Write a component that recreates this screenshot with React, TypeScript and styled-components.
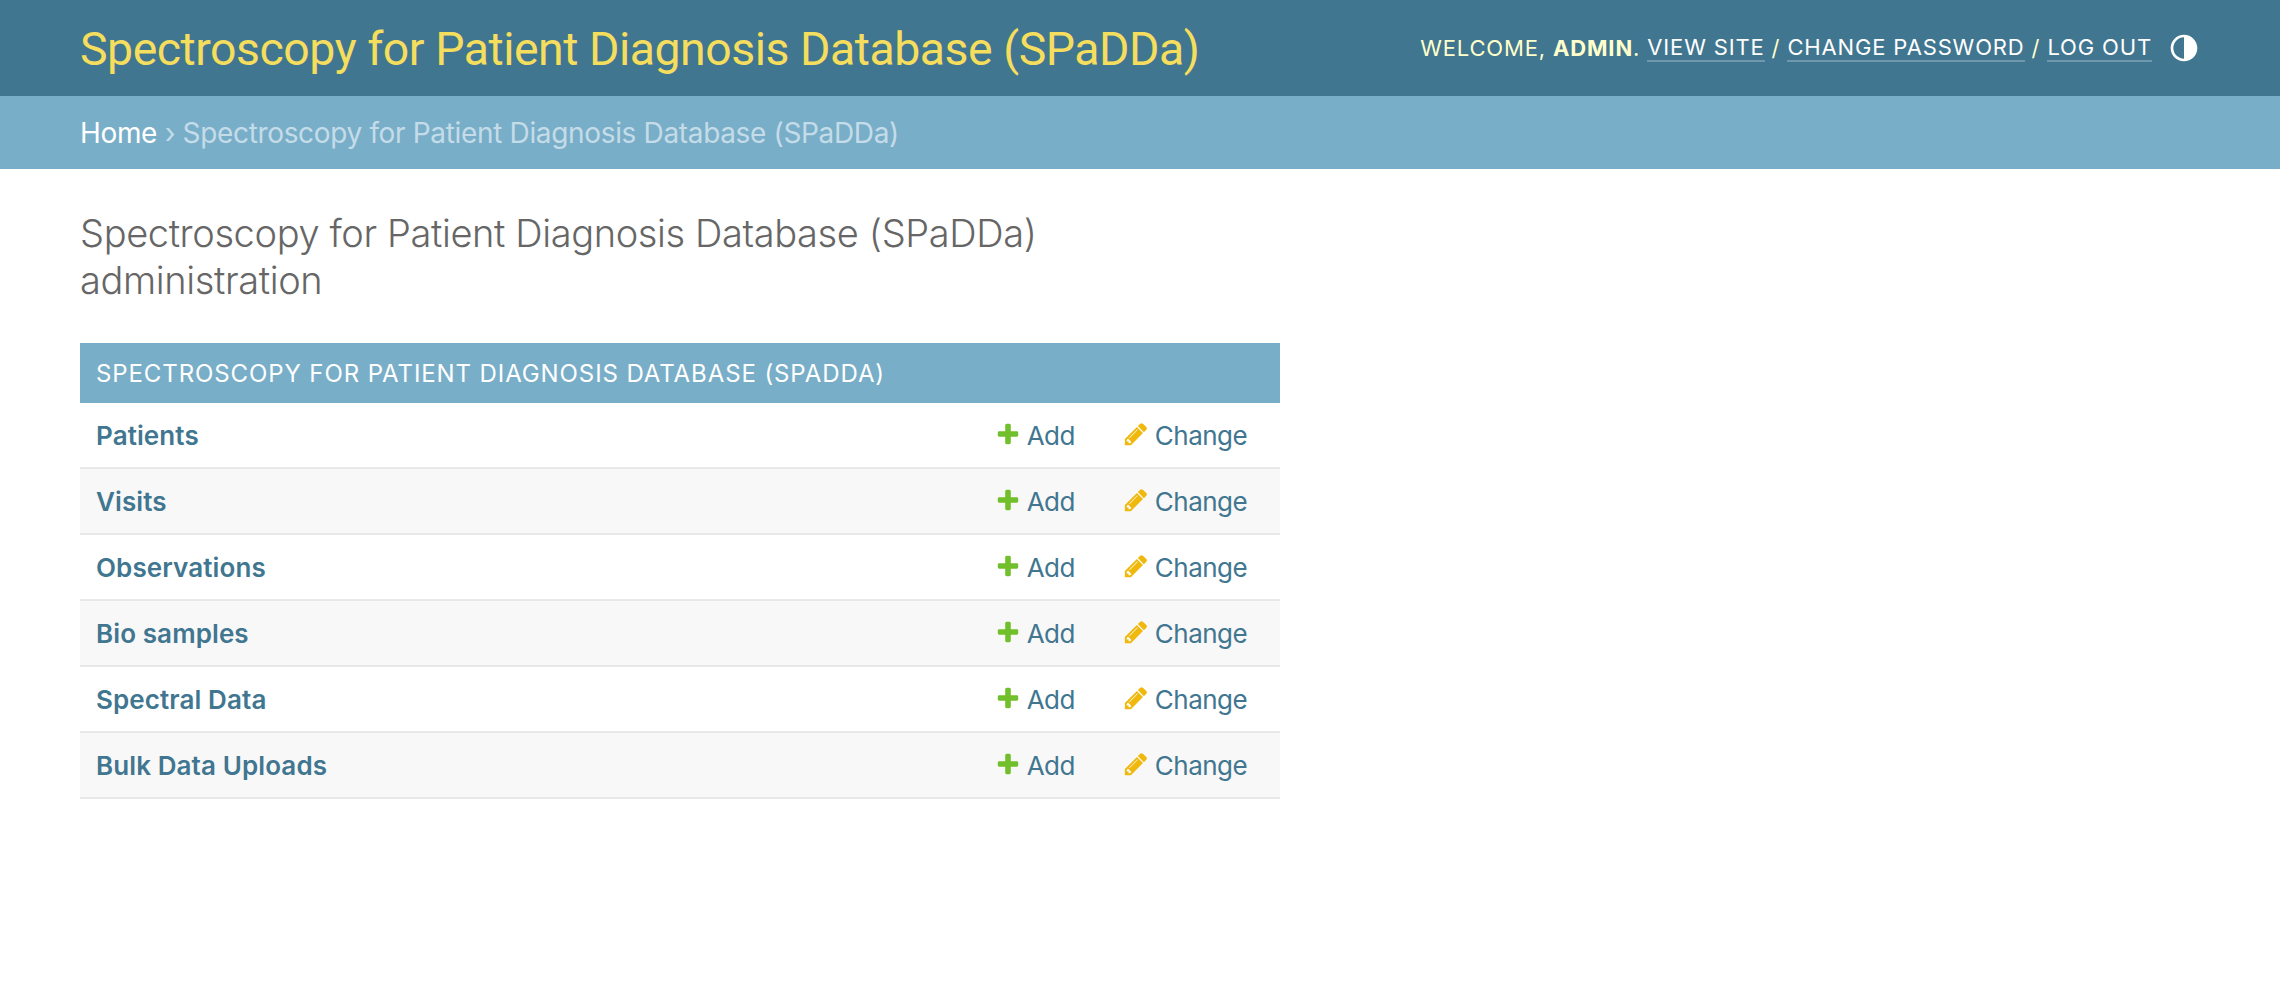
import React from "react";
import styled, { createGlobalStyle } from "styled-components";

const GlobalStyle = createGlobalStyle`
  html, body {
    margin: 0;
    padding: 0;
    background: #fff;
    font-family: Inter, "Liberation Sans", sans-serif;
    -webkit-font-smoothing: antialiased;
  }
`;

const Header = styled.header`
  height: 96px;
  box-sizing: border-box;
  padding: 0 80px;
  display: flex;
  align-items: center;
  justify-content: space-between;
  background: #417690;
`;

const Branding = styled.h1`
  margin: 2px 0 0;
  font-family: Roboto, "Liberation Sans", sans-serif;
  font-size: 46.4px;
  font-weight: 400;
  letter-spacing: -0.47px;
  color: #f5dd5d;
`;

const UserTools = styled.div`
  display: flex;
  align-items: center;
  font-size: 22px;
  letter-spacing: 0.85px;
  text-transform: uppercase;
  color: #ffc;
  white-space: pre;
`;

const UserName = styled.strong`
  font-weight: 700;
`;

const ToolLink = styled.a`
  color: #fff;
  border-bottom: 2px solid rgba(255, 255, 255, 0.25);
`;

const ThemeToggle = styled.button`
  width: 32px;
  height: 32px;
  margin-left: 16px;
  padding: 0;
  border: 0;
  background: none;
  color: #fff;
  display: flex;
  svg {
    width: 32px;
    height: 32px;
    fill: currentColor;
  }
`;

const Breadcrumbs = styled.nav`
  height: 73px;
  box-sizing: border-box;
  padding: 0 80px;
  display: flex;
  align-items: center;
  background: #79aec8;
  color: #c4dce8;
  font-size: 28px;
  letter-spacing: -0.34px;
  white-space: pre;
`;

const Crumb = styled.a`
  color: #fff;
`;

const Main = styled.main`
  padding: 40px 80px;
  width: 1200px;
`;

const PageTitle = styled.h2`
  margin: 0 0 38px;
  padding: 1px 0;
  font-size: 38px;
  line-height: 47px;
  font-weight: 300;
  letter-spacing: -0.38px;
  color: #666;
`;

const Caption = styled.div`
  height: 60px;
  box-sizing: border-box;
  padding: 1px 16px 0;
  display: flex;
  align-items: center;
  background: #79aec8;
  color: #fff;
  font-size: 24px;
  letter-spacing: 0.9px;
  text-transform: uppercase;
`;

const Row = styled.div<{ $alt: boolean }>`
  height: 66px;
  box-sizing: border-box;
  padding: 0 33px 0 16px;
  display: flex;
  align-items: center;
  border-bottom: 2px solid #e8e8e8;
  background: ${(props) => (props.$alt ? "#f8f8f8" : "#fff")};
  font-size: 26px;
`;

const ModelName = styled.a`
  flex: 1;
  font-weight: 600;
  letter-spacing: 0.1px;
  color: #417690;
`;

const ActionLink = styled.a`
  display: flex;
  align-items: center;
  gap: 6px;
  letter-spacing: -0.55px;
  color: #417690;
  & + & {
    margin-left: 48px;
  }
  svg {
    width: 26px;
    height: 26px;
    margin-top: -3px;
  }
`;

const PlusIcon = () => (
  <svg viewBox="0 0 1792 1792">
    <path
      fill="#70bf2b"
      d="M1600 796v192q0 40-28 68t-68 28h-416v416q0 40-28 68t-68 28h-192q-40 0-68-28t-28-68v-416h-416q-40 0-68-28t-28-68v-192q0-40 28-68t68-28h416v-416q0-40 28-68t68-28h192q40 0 68 28t28 68v416h416q40 0 68 28t28 68z"
    />
  </svg>
);

const PencilIcon = () => (
  <svg viewBox="0 0 1792 1792">
    <path
      fill="#efb80b"
      d="M491 1536l91-91-235-235-91 91v107h128v128h107zm523-928q0-22-22-22-10 0-17 7l-542 542q-7 7-7 17 0 22 22 22 10 0 17-7l542-542q7-7 7-17zm-54-192l416 416-832 832h-416v-416zm683 96q0 53-37 90l-166 166-416-416 166-165q36-38 90-38 53 0 91 38l235 234q37 39 37 91z"
    />
  </svg>
);

const models = [
  "Patients",
  "Visits",
  "Observations",
  "Bio samples",
  "Spectral Data",
  "Bulk Data Uploads",
];

const title = "Spectroscopy for Patient Diagnosis Database (SPaDDa)";

export default function App() {
  return (
    <>
      <GlobalStyle />
      <Header>
        <Branding>{title}</Branding>
        <UserTools>
          Welcome, <UserName>admin</UserName>. <ToolLink>View site</ToolLink> /{" "}
          <ToolLink>Change password</ToolLink> / <ToolLink>Log out</ToolLink>
          <ThemeToggle>
            <svg viewBox="0 0 24 24">
              <path d="M12 22C6.477 22 2 17.523 2 12S6.477 2 12 2s10 4.477 10 10-4.477 10-10 10zm0-2V4a8 8 0 1 0 0 16z" />
            </svg>
          </ThemeToggle>
        </UserTools>
      </Header>
      <Breadcrumbs>
        <Crumb>Home</Crumb> › {title}
      </Breadcrumbs>
      <Main>
        <PageTitle>{title} administration</PageTitle>
        <Caption>{title}</Caption>
        {models.map((name, i) => (
          <Row key={name} $alt={i % 2 === 1}>
            <ModelName>{name}</ModelName>
            <ActionLink>
              <PlusIcon />
              Add
            </ActionLink>
            <ActionLink>
              <PencilIcon />
              Change
            </ActionLink>
          </Row>
        ))}
      </Main>
    </>
  );
}
